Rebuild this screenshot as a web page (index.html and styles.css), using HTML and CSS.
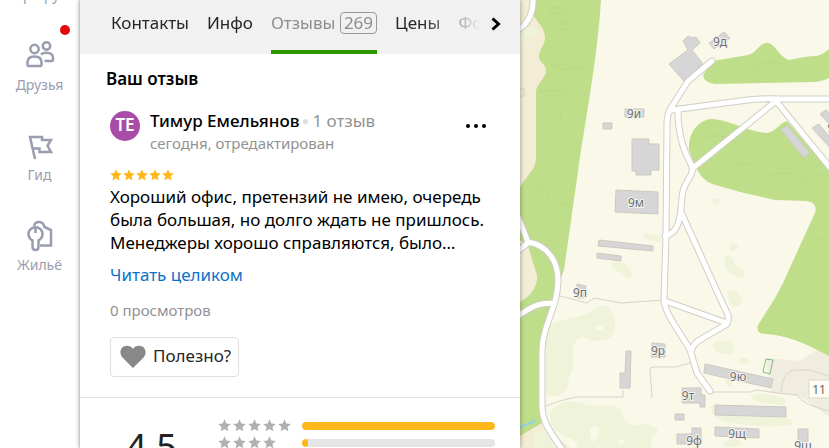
FILE: index.html
```html
<!DOCTYPE html>
<html lang="ru">
<head>
  <meta charset="UTF-8">
  <meta name="viewport" content="width=device-width, initial-scale=1.0">
  <title>Отзывы</title>
  <link rel="stylesheet" href="styles.css">
</head>
<body>
  <svg class="sprite" aria-hidden="true">
    <symbol id="star" viewBox="0 0 12 12">
      <path d="M6 .3l1.7 3.8 4.1.4-3.1 2.8.9 4.1L6 9.3l-3.6 2.1.9-4.1L.2 4.5l4.1-.4z"/>
    </symbol>
  </svg>

  <div class="app">
    <nav class="sidebar">
      <a class="side-item" href="#"><span>Маршруты</span></a>
      <a class="side-item" href="#">
        <svg class="side-icon" viewBox="0 0 30 36">
          <circle cx="9.5" cy="12" r="4.2"/>
          <circle cx="21.5" cy="9" r="3.7"/>
          <path d="M2.5 28v-2.5c0-4 3-6 7-6s7 2 7 6V28q0 1-1 1h-12q-1 0-1-1z"/>
          <path d="M16 17.5c1.5-1.3 3.3-1.8 5.5-1.8 4 0 6.5 2 6.5 5.3v1.5q0 1.5-1.5 1.5h-7"/>
        </svg>
        <span>Друзья</span>
        <i class="dot"></i>
      </a>
      <a class="side-item" href="#">
        <svg class="side-icon" viewBox="0 0 30 36">
          <path d="M10 32L5 10h12v3h9l-3.5 5.8L26 25H14.5v-3.5H8"/>
        </svg>
        <span>Гид</span>
      </a>
      <a class="side-item" href="#">
        <svg class="side-icon" viewBox="0 0 30 36">
          <path d="M9 9c1.5-5.5 9-5.500 10.500 1l6.500 3v15.500H15"/>
          <path d="M7.500 25v-1.500a7 7 0 1 1 6 0V30q0 3-3 3t-3-3zM10.500 10v6"/>
        </svg>
        <span>Жильё</span>
      </a>
    </nav>

    <main class="panel">
      <header class="tabs">
        <div class="tabs-list">
          <a class="tab" href="#">Контакты</a>
          <a class="tab" href="#">Инфо</a>
          <a class="tab active" href="#">Отзывы <span class="count">269</span></a>
          <a class="tab" href="#">Цены</a>
          <a class="tab" href="#">Фото</a>
        </div>
        <button class="tabs-next" aria-label="Дальше">
          <svg width="10" height="14" viewBox="0 0 10 14"><path d="M1.5 1.5L7.5 7l-6 5.5"/></svg>
        </button>
      </header>

      <section class="review">
        <h2>Ваш отзыв</h2>
        <div class="author">
          <div class="avatar">ТЕ</div>
          <div class="author-info">
            <div class="author-name"><b>Тимур Емельянов</b><i class="sep"></i><span>1 отзыв</span></div>
            <div class="author-date">сегодня, отредактирован</div>
          </div>
          <button class="more" aria-label="Ещё"><i></i><i></i><i></i></button>
        </div>
        <div class="stars">
          <svg><use href="#star"/></svg><svg><use href="#star"/></svg><svg><use href="#star"/></svg><svg><use href="#star"/></svg><svg><use href="#star"/></svg>
        </div>
        <p class="text">Хороший офис, претензий не имею, очередь<br>была большая, но долго ждать не пришлось.<br>Менеджеры хорошо справляются, было…</p>
        <a class="read-more" href="#">Читать целиком</a>
        <div class="views">0 просмотров</div>
        <button class="useful">
          <svg width="26" height="24" viewBox="0 0 26 24"><path d="M13 23L2.5 12.5C-2 7 1.5.8 6.8.8 9.5.8 11.8 2 13 4 14.2 2 16.5.8 19.2.8c5.3 0 8.8 6.2 4.3 11.7z"/></svg>
          Полезно?
        </button>
      </section>

      <section class="rating">
        <div class="score">4,5</div>
        <div class="rows">
          <div class="row">
            <div class="row-stars">
              <svg><use href="#star"/></svg><svg><use href="#star"/></svg><svg><use href="#star"/></svg><svg><use href="#star"/></svg><svg><use href="#star"/></svg>
            </div>
            <div class="bar"><div class="fill" style="width: 100%"></div></div>
          </div>
          <div class="row">
            <div class="row-stars">
              <svg><use href="#star"/></svg><svg><use href="#star"/></svg><svg><use href="#star"/></svg><svg><use href="#star"/></svg>
            </div>
            <div class="bar"><div class="fill" style="width: 3%"></div></div>
          </div>
        </div>
      </section>
    </main>

    <div class="map">
      <svg viewBox="520 0 309 448" preserveAspectRatio="xMinYMin slice">
        <!-- земля -->
        <path class="sand" d="M520 0H550V200H520zM520 230H545V310H520zM520 430L542 422 570 448H520z"/>
        <path class="built" d="M766 358L800 361 817 350 829 356V417L800 396 771 393z"/>

        <!-- кустарник -->
        <g class="bush">
          <path d="M520 30Q532 24 540 31 538 37 527 37L525 46H520zM534 433L545 430 560 448H534z"/>
          <path d="M546 332C552 320 560 321 572 318 588 316 596 307 605 305 614 309 618 327 612 336 604 342 590 342 584 337 574 339 571 346 573 360 574 374 566 378 569 384 566 395 554 399 546 394 550 380 545 366z"/>
          <path d="M550 413C562 397 576 401 588 405 602 407 611 402 621 410 623 423 632 428 645 424 662 428 659 433 652 436L651 448H577C581 438 562 439 551 426z"/>
          <path d="M643 235Q646 231 661 237 662 243 654 241 643 240 643 235zM611 264Q617 259 624 264 632 267 632 276 626 283 623 274 611 268 611 264z"/>
          <path d="M712 200Q716 196 720 200 720 205 714 205 711 203 712 200zM729 247Q733 241 738 246 737 251 731 251zM725 256Q732 253 735 264L745 272Q743 280 735 276 722 269 725 256zM728 292Q737 286 742 300 742 307 733 307 727 302 728 292z"/>
          <path d="M713 345Q717 338 724 342 733 337 734 348 733 358 726 354 713 352 713 345zM738 360Q745 355 750 361 746 366 740 364zM751 395Q765 391 785 399 789 407 776 404 752 404 751 395zM711 407Q716 401 723 416L786 418Q796 422 791 425 765 428 738 424 711 422 711 407zM723 443Q733 436 743 442 741 448 723 446zM725 380Q733 379 732 385 727 390 725 380zM813 0H819L815 1z"/>
        </g>
        <path class="hole" d="M594 328q6-6 10 0-3 5-10 0zM590 428q6-4 10 0-3 14-8 14-3-8-2-14zM618 441q4-4 6 0 0 5-3 4z"/>

        <!-- лес -->
        <g class="forest">
          <path d="M535 0H601C598 50 589 100 581 150L564 270 561 278C558 300 555 315 548 328Q542 340 542 352V423L520 436V302C533 295 540 282 536 272L528 246 520 240V187L532 170Q536 165 536 158V92C536 84 546 78 546 71 546 64 539 62 539 57 539 50 545 44 545 38 545 28 538 23 533 15z"/>
          <path d="M713 61L748 55C757 53 759 43 767 43 775 43 779 57 789 60 799 58 808 56 817 56Q824 54 829 49V78Q821 82 813 82L715 84Q704 83 703 75z"/>
          <path d="M689 150C688 130 701 119 712 119 730 120 752 133 767 133 775 132 780 123 787 121L829 170V356C807 344 787 335 766 334 756 334 756 327 760 322L775 298 783 283 814 215C819 206 812 201 806 201L775 200 740 192 712 184C700 178 696 170 689 150z"/>
        </g>
        <path class="forest-line" d="M548 10Q560 3 568 12 560 17 548 10M557 24Q573 18 572 26 560 35 557 24M550 64Q566 70 571 50M560 70Q580 62 590 75M540 92Q556 88 568 95M545 108Q565 110 560 120M528 180Q546 187 549 199M547 214Q563 200 570 205M545 240L562 244M750 71Q770 54 790 68M700 140Q720 130 735 142M730 165Q760 160 770 175 793 168 805 182 820 170 829 176M811 245Q820 235 829 240"/>
        <path class="river" d="M520 427L535 421"/>

        <!-- тропинки -->
        <path class="trail" d="M560 296L587 303 594 298 621 303 664 300M543 407Q560 400 576 397H623V390M652 398L650 370Q650 367 654 367L675 367 690 363M711 392H750L757 390 777 393 797 395Q803 405 829 411M781 392Q783 370 795 370H810L829 376M520 89H524V96H520"/>

        <!-- дороги -->
        <g class="road-edge">
          <path id="roads-left" d="M533 -2Q534 20 518 30M518 217L528 242C548 245 558 262 558 280 558 308 542 325 542 352V405C542 422 549 430 564 452M518 251L528 243M518 316C530 308 536 303 554 303"/>
          <path id="roads-right" d="M712 61L688 81 671 108Q667 114 667 124L666 235 664 300C665 315 683 336 690 350L697 373 710 391M672 110L740 101Q760 98 780 99H832M678 110C678 130 681 146 690 162Q694 169 691 175C683 188 682 190 681 210 679 225 676 233 665 236M776 101L693 168M776 101L832 170M681 212L720 298 728 315Q729 320 727 324L698 341Q692 346 691 352M665 301L727 323"/>
        </g>
        <g class="road">
          <use href="#roads-left"/>
          <use href="#roads-right"/>
        </g>

        <!-- дома -->
        <g class="house">
          <path d="M709 43L724 32 730 38 714 49zM669 64L688 50 683 41 688 36 692 38 696 37 700 43 692 50 703 64 684 81z"/>
          <path d="M625 109H644V117H625zM603 123H612V129H603zM632 139H649V144H659V170H651V175H636V171H632zM616 190L658 192V214L615 212z"/>
          <path d="M599 240L653 246V251L598 246zM597 253L621 256V261L597 258zM577 284L586 286 584 298H577z"/>
          <path d="M652 343L665 344V357H651zM626 351H631L630 388H620V373H625zM682 388H701V395H705V407H700V403H682zM705 364L773 379 771 388 704 373zM715 405L786 407V417L715 415zM715 427L759 429V438L715 436z"/>
          <path d="M677 434H692V428H701V444H677zM675 414H684V420H675zM798 429H808V442H798zM781 130L787 125 810 153 804 158zM812 128L819 124 832 140V150zM820 114L826 110 832 116V127z"/>
        </g>
        <path class="field" d="M766 359L773 360 770 374 763 372z"/>

        <g class="label">
          <text x="720" y="46">9д</text>
          <text x="634" y="118">9и</text>
          <text x="636" y="207">9м</text>
          <text x="580" y="297">9п</text>
          <text x="658" y="355">9р</text>
          <text x="688" y="400">9т</text>
          <text x="738" y="381">9ю</text>
          <text x="737" y="438">9щ</text>
          <text x="694" y="445">9ф</text>
          <text x="803" y="450">9ш</text>
          <text x="834" y="132">9э</text>
        </g>
        <path class="plate" d="M809 380H832V398H809z"/>
        <text class="plate-text" x="819" y="394">11</text>
      </svg>
    </div>
  </div>
</body>
</html>
```

FILE: styles.css
```css
* {
  box-sizing: border-box;
}
body {
  margin: 0;
  font-family: "Noto Sans", sans-serif;
  font-size: 17px;
  color: #000;
}
a {
  color: inherit;
  text-decoration: none;
}
button {
  font: inherit;
  color: inherit;
  background: none;
  border: none;
  padding: 0;
  cursor: pointer;
}
.sprite {
  display: none;
}
.app {
  display: flex;
  height: 100vh;
  overflow: hidden;
}

/* левое меню */
.sidebar {
  flex: 0 0 80px;
  display: flex;
  flex-direction: column;
  margin-top: -85px;
  border-right: 1px solid #ededed;
  background: #fff;
}
.side-item {
  position: relative;
  flex: 0 0 90px;
  display: flex;
  flex-direction: column;
  align-items: center;
  justify-content: flex-end;
  gap: 2px;
  font-size: 14px;
  line-height: 20px;
  color: #9a9db0;
}
.side-icon {
  width: 30px;
  height: 36px;
  fill: none;
  stroke: #9a9db0;
  stroke-width: 2.5;
}
.dot {
  position: absolute;
  top: 20px;
  right: 9px;
  width: 10px;
  height: 10px;
  border-radius: 50%;
  background: #e30b0b;
}

/* карточка */
.panel {
  position: relative;
  z-index: 1;
  flex: 0 0 440px;
  background: #fff;
  box-shadow: 0 0 5px rgba(0, 0, 0, 0.4);
}
.tabs {
  display: flex;
  height: 54px;
  padding: 0 19px 0 31px;
  background: #f1f1f1;
}
.tabs-list {
  flex: 1;
  display: flex;
  gap: 18px;
  overflow: hidden;
  mask-image: linear-gradient(to right, #000 310px, transparent 370px);
}
.tab {
  flex: none;
  padding-top: 11px;
  line-height: 24px;
  color: #262626;
}
.tab.active {
  color: #8e8e8e;
  border-bottom: 4px solid #2b9800;
}
.count {
  display: inline-block;
  padding: 0 3px;
  border: 1px solid #999;
  border-radius: 4px;
  line-height: 20px;
}
.tabs-next {
  width: 10px;
  padding-bottom: 6px;
}
.tabs-next svg {
  display: block;
  fill: none;
  stroke: #000;
  stroke-width: 3;
}
.review {
  padding: 14px 30px 20px;
  border-bottom: 1px solid #e2e2e2;
}
h2 {
  margin: 0 0 20px -4px;
  font-size: 17px;
  line-height: 22px;
  font-weight: 600;
}
.author {
  display: flex;
  align-items: flex-start;
  gap: 10px;
}
.avatar {
  width: 30px;
  height: 30px;
  margin-top: 1px;
  border-radius: 50%;
  background: #a84ca8;
  color: #fff;
  font-weight: 600;
  line-height: 28px;
  text-align: center;
}
.author-info {
  flex: 1;
}
.author-name {
  display: flex;
  align-items: center;
  line-height: 22px;
}
.author-name b {
  font-weight: 500;
}
.author-name span,
.author-date,
.views {
  color: #929292;
}
.author-date {
  font-size: 15px;
  line-height: 22px;
}
.sep {
  width: 5px;
  height: 5px;
  margin: 0 4px;
  border-radius: 50%;
  background: #ddd;
}
.more {
  display: flex;
  gap: 4px;
  padding: 14px 4px 8px;
}
.more i {
  width: 4px;
  height: 4px;
  border-radius: 50%;
  background: #000;
}
.stars {
  display: flex;
  gap: 1px;
  margin-top: 15px;
  fill: #ffb81c;
}
.stars svg {
  width: 12px;
  height: 12px;
}
.text {
  margin: 4px 0 10px;
  line-height: 23px;
  white-space: nowrap;
}
.read-more {
  display: block;
  line-height: 22px;
  color: #0b72c9;
}
.views {
  margin: 13px 0 16px;
  font-size: 15px;
  line-height: 22px;
}
.useful {
  display: flex;
  align-items: center;
  gap: 7px;
  height: 40px;
  padding: 0 7px 4px 9px;
  border: 1px solid #e0e0e0;
  border-radius: 4px;
  color: #262626;
}
.useful svg {
  margin-top: 4px;
  fill: #888;
}
.rating {
  display: flex;
  padding: 19px 25px 0 46px;
}
.score {
  width: 92px;
  font-size: 36px;
  line-height: 60px;
  color: #222;
}
.rows {
  flex: 1;
}
.row {
  display: flex;
  align-items: center;
  height: 17px;
}
.row-stars {
  display: flex;
  gap: 2px;
  width: 84px;
  fill: #b0b0b0;
}
.row-stars svg {
  width: 13px;
  height: 13px;
}
.bar {
  flex: 1;
  height: 8px;
  border-radius: 4px;
  background: #e5e5e5;
  overflow: hidden;
}
.fill {
  height: 100%;
  border-radius: 4px;
  background: #ffb81c;
}

/* карта */
.map {
  flex: 1;
  min-width: 0;
  background: #faf8e8;
}
.map svg {
  display: block;
  width: 100%;
  height: 100%;
}
.sand {
  fill: #f4edd6;
}
.built {
  fill: #f0ede0;
}
.bush {
  fill: #eef3da;
}
.hole {
  fill: #faf8e8;
}
.forest {
  fill: #bfde8a;
}
.forest-line {
  fill: none;
  stroke: #b9d983;
  stroke-width: 1;
}
.river {
  stroke: #8fd0ee;
  stroke-width: 2;
}
.trail {
  fill: none;
  stroke: #d8d4c8;
  stroke-width: 1;
}
.road-edge,
.road {
  fill: none;
  stroke-linecap: round;
  stroke-linejoin: round;
}
.road-edge {
  stroke: #d0cec8;
  stroke-width: 7;
}
.road {
  stroke: #fff;
  stroke-width: 5;
}
.house {
  fill: #d6d6d6;
  stroke: #cdc9c0;
  stroke-width: 1;
}
.field {
  fill: none;
  stroke: #83bd78;
  stroke-width: 1;
}
.label {
  font-size: 12px;
  fill: #6f6f6f;
  stroke: #f4f4f0;
  stroke-width: 2;
  paint-order: stroke;
  text-anchor: middle;
}
.plate {
  fill: #fffdf6;
  stroke: #ddd8c4;
}
.plate-text {
  font-size: 12px;
  fill: #666;
  text-anchor: middle;
}
```
